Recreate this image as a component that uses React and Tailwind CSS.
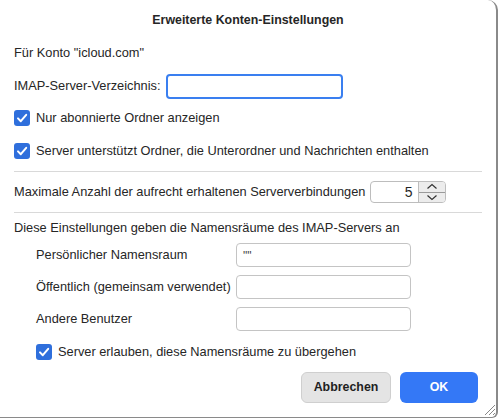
import React from 'react';

function Check({ className = '' }) {
    return (
        <span className={`flex h-[16px] w-[16px] shrink-0 items-center justify-center rounded-[3px] bg-[#2f6fdc] ${className}`}>
            <svg width="12" height="12" viewBox="0 0 12 12" fill="none">
                <path d="M2 6.4 L4.8 9.2 L10.2 2.8" stroke="white" strokeWidth="2" strokeLinecap="round" strokeLinejoin="round" />
            </svg>
        </span>
    );
}

function Field({ value = '', className = '' }) {
    return (
        <div className={`flex h-[24px] items-center rounded-[4px] border border-[#c4c4c4] bg-white px-[6px] pt-[2px] text-[12px] text-[#444] ${className}`}>
            {value}
        </div>
    );
}

function NamespaceRow({ label, value }) {
    return (
        <div className="flex h-[32px] items-start pl-[22px]">
            <div className="flex h-[24px] w-[200px] items-center">{label}</div>
            <Field value={value} className="w-[175px]" />
        </div>
    );
}

export default function App() {
    return (
        <div className="relative h-[419px] w-[500px] bg-white text-[12.8px] text-[#262626]" style={{ fontFamily: '"Liberation Sans", Arial, sans-serif' }}>
            <div className="flex h-[418px] w-[498px] flex-col rounded-tr-[10px] rounded-br-[6px] border-r-2 border-b border-[#8a8a8a] pl-[14px] pr-[14px]">
                <div className="flex h-[40px] items-center justify-center text-[12.4px] font-bold">Erweiterte Konten-Einstellungen</div>

                <div className="flex h-[26px] items-center">Für Konto "icloud.com"</div>

                <div className="flex h-[40px] items-center gap-[5px]">
                    <span>IMAP-Server-Verzeichnis:</span>
                    <div className="h-[25px] w-[177px] rounded-[4px] border-2 border-[#3a7ff0] bg-white" />
                </div>

                <div className="flex h-[24px] items-center gap-[6px]">
                    <Check />
                    <span>Nur abonnierte Ordner anzeigen</span>
                </div>

                <div className="flex h-[41px] items-center gap-[6px]">
                    <Check />
                    <span>Server unterstützt Ordner, die Unterordner und Nachrichten enthalten</span>
                </div>

                <div className="h-px bg-[#d9d9d9]" />

                <div className="flex h-[40px] items-center gap-[5px]">
                    <span>Maximale Anzahl der aufrecht erhaltenen Serververbindungen</span>
                    <div className="flex h-[22px] overflow-hidden rounded-[4px] border border-[#bdbdbd]">
                        <div className="flex w-[47px] items-center justify-end pr-[6px] text-[14px]">5</div>
                        <div className="flex w-[27px] flex-col border-l border-[#bdbdbd] bg-[#ececec]">
                            <div className="flex flex-1 items-center justify-center border-b border-[#9a9a9a]">
                                <svg width="12" height="7" viewBox="0 0 12 7" fill="none">
                                    <path d="M1.5 5.5 L6 1.5 L10.5 5.5" stroke="#333" strokeWidth="1.2" />
                                </svg>
                            </div>
                            <div className="flex flex-1 items-center justify-center">
                                <svg width="12" height="7" viewBox="0 0 12 7" fill="none">
                                    <path d="M1.5 1.5 L6 5.5 L10.5 1.5" stroke="#333" strokeWidth="1.2" />
                                </svg>
                            </div>
                        </div>
                    </div>
                </div>

                <div className="h-px bg-[#d9d9d9]" />

                <div className="flex h-[30px] items-center">Diese Einstellungen geben die Namensräume des IMAP-Servers an</div>

                <NamespaceRow label="Persönlicher Namensraum" value={'""'} />
                <NamespaceRow label="Öffentlich (gemeinsam verwendet)" />
                <NamespaceRow label="Andere Benutzer" />

                <div className="flex h-[26px] items-center gap-[6px] pl-[22px]">
                    <Check />
                    <span>Server erlauben, diese Namensräume zu übergehen</span>
                </div>

                <div className="mt-[7px] flex justify-end gap-[9px] pr-[4px] text-[12.4px]">
                    <button className="h-[31px] w-[90px] rounded-[6px] border border-[#cfcfcf] bg-[#e4e4e4] font-bold text-[#1f1f1f]">Abbrechen</button>
                    <button className="h-[31px] w-[78px] rounded-[6px] bg-[#3478f6] font-bold text-white">OK</button>
                </div>
            </div>

            {/* resize grip */}
            <svg className="absolute right-[4px] bottom-[3px]" width="12" height="12" viewBox="0 0 12 12" fill="none">
                <path d="M1 11 L11 1 M5 11 L11 5 M9 11 L11 9" stroke="#888" strokeWidth="1" />
            </svg>
        </div>
    );
}
